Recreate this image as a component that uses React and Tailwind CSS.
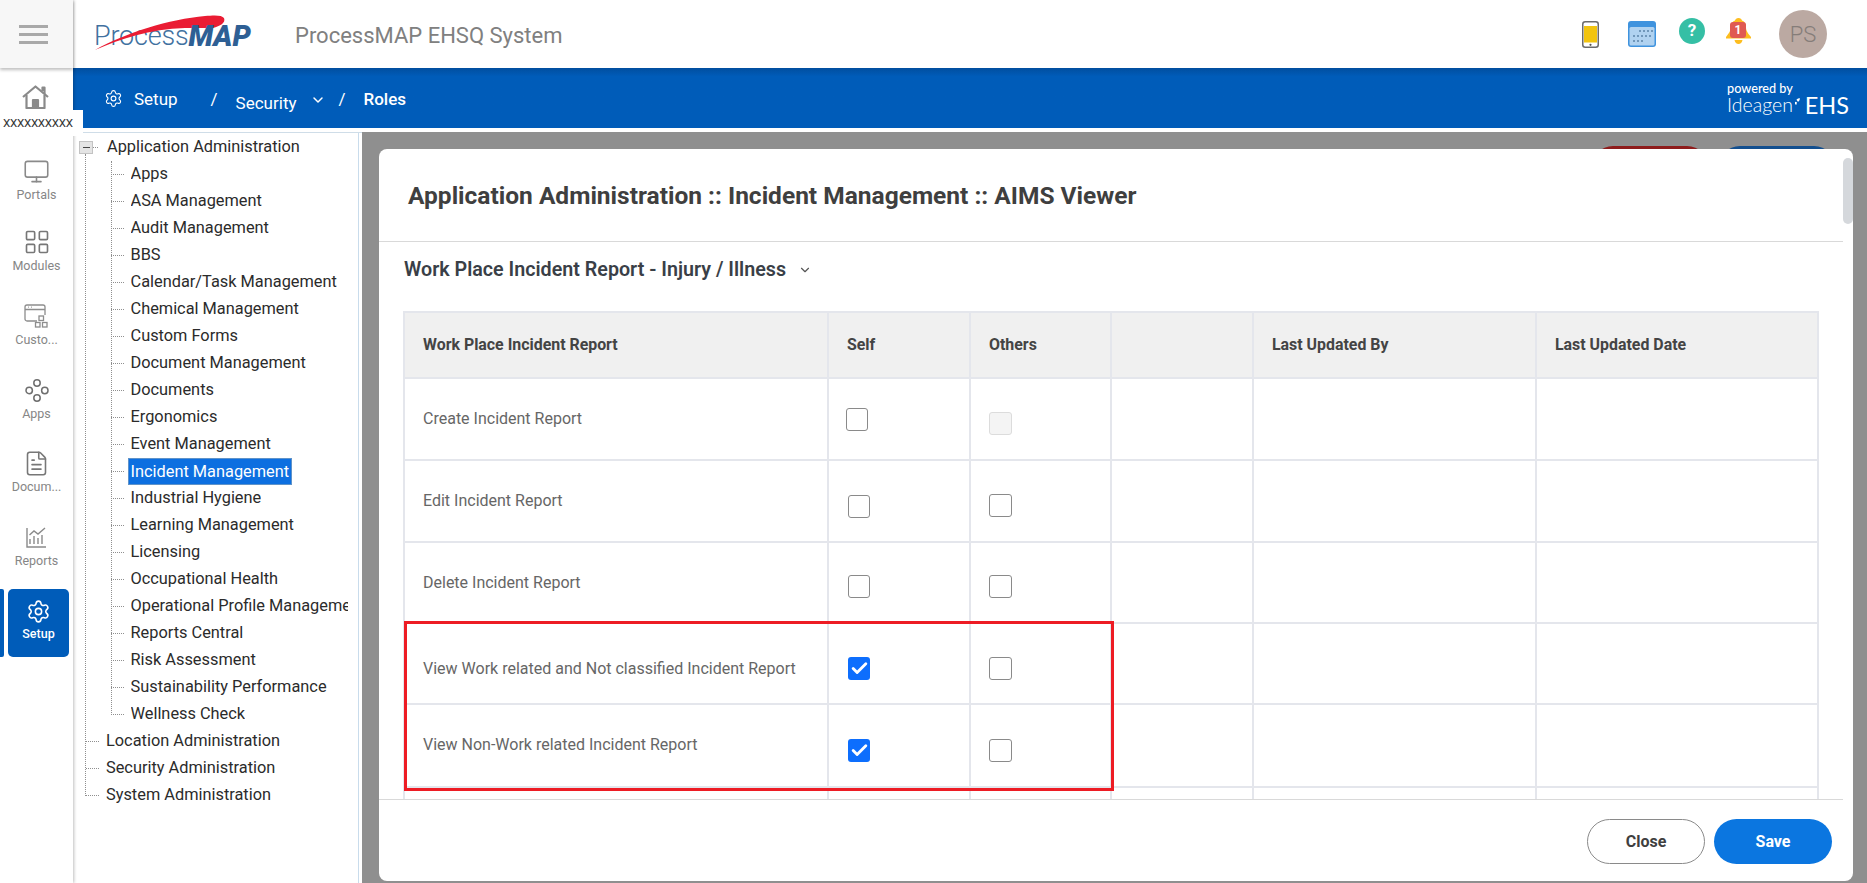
import { Check, ChevronDown, FileText, LayoutGrid, Monitor, Settings } from "lucide-react";

const treeItems = [
  "Apps", "ASA Management", "Audit Management", "BBS", "Calendar/Task Management", "Chemical Management",
  "Custom Forms", "Document Management", "Documents", "Ergonomics", "Event Management", "Incident Management",
  "Industrial Hygiene", "Learning Management", "Licensing", "Occupational Health", "Operational Profile Management",
  "Reports Central", "Risk Assessment", "Sustainability Performance", "Wellness Check",
];

const rows = [
  { label: "Create Incident Report", h: "h-[82px]", text: "pt-0", self: "pt-0 pl-[17px]", others: "pt-2 pl-[18px]", disabled: true },
  { label: "Edit Incident Report", h: "h-[82px]", text: "pt-0", self: "pt-[10px] pl-[19px]", others: "pt-2 pl-[18px]" },
  { label: "Delete Incident Report", h: "h-[81px]", text: "pt-0", self: "pt-2 pl-[19px]", others: "pt-2 pl-[18px]" },
  { label: "View Work related and Not classified Incident Report", h: "h-[81px]", text: "pt-[10px]", self: "pt-[10px] pl-[19px]", others: "pt-[10px] pl-[18px]", checked: true },
  { label: "View Non-Work related Incident Report", h: "h-[83px]", text: "pb-[2px]", self: "pt-[10px] pl-[19px]", others: "pt-[10px] pl-[18px]", checked: true },
  { label: "", h: "h-[30px]", text: "", self: "", others: "" },
];

function HomeIcon() {
  return (
    <svg width="27" height="24" viewBox="0 0 27 24" fill="none" stroke="#8a8a8a" strokeWidth="2.2" strokeLinejoin="round">
      <path d="M1 12 13.500 1.500 26 12" />
      <path d="M4.500 10v13h18V10" />
      <path d="M20.500 6V2.500h2V9" />
      <path d="M11 23v-8h5v8" fill="#8a8a8a" />
    </svg>
  );
}

function CustomIcon() {
  return (
    <svg width="25" height="24" viewBox="0 0 25 24" fill="none" stroke="#8d8d8d" strokeWidth="1.3">
      <path d="M13 17H3a2 2 0 0 1-2-2V3a2 2 0 0 1 2-2h16a2 2 0 0 1 2 2v8" />
      <path d="M1 5.500h20M4 3.200h.8M7 3.200h.8" />
      <rect x="15" y="12" width="4.500" height="4.500" />
      <rect x="11.500" y="18.500" width="4.500" height="4.500" />
      <rect x="18.500" y="18.500" width="4.500" height="4.500" />
    </svg>
  );
}

function AppsIcon() {
  return (
    <svg width="24" height="23" viewBox="0 0 24 23" fill="none" stroke="#6f6f6f" strokeWidth="1.5">
      <circle cx="12" cy="4" r="3.200" />
      <circle cx="4.200" cy="11.500" r="3.200" />
      <circle cx="19.800" cy="11.500" r="3.200" />
      <circle cx="12" cy="19" r="3.200" />
    </svg>
  );
}

function ReportsIcon() {
  return (
    <svg width="21" height="21" viewBox="0 0 21 21" fill="none" stroke="#8a8a8a" strokeWidth="1.4">
      <path d="M1 1v19h19" />
      <path d="M4 17v-5M8 17V9M12 17v-6M16 17V8" />
      <path d="M3.500 8 8 4l4 3 7-6" />
    </svg>
  );
}

function RailItem({ icon, label, className }) {
  return (
    <div className={`flex flex-col items-center ${className}`}>
      <div className="flex h-[24px] items-center justify-center">{icon}</div>
      <span className="mt-[4px] text-[12.5px] leading-[16px] text-[#868686]">{label}</span>
    </div>
  );
}

function Rail() {
  return (
    <aside className="relative z-20 flex w-[73px] shrink-0 flex-col bg-white shadow-[1px_0_3px_rgba(0,0,0,0.25)]">
      <div className="flex h-[68px] flex-col items-center justify-center gap-[5px] bg-[#f7f7f7] pr-[6px] shadow-[0_2px_3px_rgba(0,0,0,0.25)]">
        <span className="h-[3px] w-[29px] bg-[#a9a9a9]" />
        <span className="h-[3px] w-[29px] bg-[#a9a9a9]" />
        <span className="h-[3px] w-[29px] bg-[#a9a9a9]" />
      </div>
      <div className="relative h-[88px] pt-[17px]">
        <div className="flex justify-center pr-[2px]"><HomeIcon /></div>
        <div className="absolute left-0 top-[42px] h-[26px] w-[83px] bg-white pl-[3px] text-[11.6px] leading-[26px] tracking-[-0.3px] text-[#333]">XXXXXXXXXX</div>
      </div>
      <RailItem icon={<Monitor size={27} strokeWidth={1.4} color="#8a8a8a" />} label="Portals" className="mt-[3px]" />
      <RailItem icon={<LayoutGrid size={28} strokeWidth={1.4} color="#777" />} label="Modules" className="mt-[27px]" />
      <RailItem icon={<CustomIcon />} label="Custo..." className="mt-[30px]" />
      <RailItem icon={<AppsIcon />} label="Apps" className="mt-[30px]" />
      <RailItem icon={<FileText size={27} strokeWidth={1.4} color="#777" />} label="Docum..." className="mt-[29px]" />
      <RailItem icon={<ReportsIcon />} label="Reports" className="mt-[30px]" />
      <div className="relative mt-[20px] ml-[8px] flex h-[68px] w-[61px] flex-col items-center rounded-[5px] bg-[#005cb9] pt-[10px]">
        <span className="absolute left-[-8px] top-0 h-[68px] w-[4px] rounded-r-[2px] bg-[#005cb9]" />
        <Settings size={25} strokeWidth={1.5} color="#fff" />
        <span className="mt-[2px] text-[12.5px] font-medium leading-[16px] text-white">Setup</span>
      </div>
    </aside>
  );
}

function Logo() {
  return (
    <div className="relative flex h-[35px] w-[160px] items-center pt-[5px] leading-none">
      <span className="text-[27px] font-light tracking-[-0.2px] text-[#41719f]">Process</span>
      <svg className="absolute left-0 top-[-2px]" width="135" height="37" viewBox="0 0 135 37">
        <path d="M1 35C31 18 76 4 111 1c10-1 17-1 19 2 2 5-4 8-11 10H91C56 14 26 24 1 35Z" fill="#ea1c33" />
      </svg>
      <span className="relative text-[29px] font-black italic text-[#2e5f94]">MAP</span>
    </div>
  );
}

function TopRight() {
  return (
    <div className="flex items-center">
      <svg width="17" height="27" viewBox="0 0 17 27">
        <rect x="0.75" y="0.75" width="15.5" height="25.5" rx="2.5" fill="#fff" stroke="#6b6b6b" strokeWidth="1.5" />
        <rect x="2" y="5" width="13" height="16.5" fill="#f2c40f" />
        <circle cx="8.5" cy="23.8" r="1.1" fill="#555" />
      </svg>
      <svg className="ml-[29px]" width="28" height="26" viewBox="0 0 28 26">
        <rect width="28" height="26" rx="3" fill="#3f93de" />
        <rect x="1.5" y="6" width="25" height="18.5" rx="1.5" fill="#b0d2f0" />
        <g fill="#5b83a8">
          <circle cx="12" cy="10" r="1" /><circle cx="16" cy="10" r="1" /><circle cx="20" cy="10" r="1" /><circle cx="24" cy="10" r="1" />
          <circle cx="6" cy="15" r="1" /><circle cx="10" cy="15" r="1" /><circle cx="14" cy="15" r="1" /><circle cx="18" cy="15" r="1" /><circle cx="22" cy="15" r="1" />
          <circle cx="6" cy="20" r="1" /><circle cx="10" cy="20" r="1" /><circle cx="14" cy="20" r="1" />
        </g>
      </svg>
      <div className="mb-[6px] ml-[23px] flex h-[26px] w-[26px] items-center justify-center rounded-full bg-[#35bfa5] text-[17px] font-bold text-white">?</div>
      <div className="relative mb-[6px] ml-[21px] h-[26px] w-[25px]">
        <svg width="25" height="26" viewBox="0 0 25 26">
          <path d="M12.500 0c2 0 3 1 3.500 2.500 3 1 4 4 4 7 0 4 3 7 5 9.500v1.500H0v-1.500C2 16 5 13 5 9.500c0-3 1-6 4-7C9.500 1 10.500 0 12.500 0Z" fill="#fdbd1f" />
          <path d="M8.500 22h8c-.5 2.500-2 4-4 4s-3.500-1.500-4-4Z" fill="#fdbd1f" />
        </svg>
        <div className="absolute left-[4px] top-[4px] flex h-[16px] w-[16px] items-center justify-center rounded-[3px] bg-[#e05a52] text-[12px] font-bold leading-none text-white">1</div>
      </div>
      <div className="ml-[28px] flex h-[48px] w-[48px] items-center justify-center rounded-full bg-[#bba9a2] text-[22px] font-light text-[#857d79]">PS</div>
    </div>
  );
}

function BlueBar() {
  return (
    <div className="flex h-[60px] items-center bg-linear-to-b from-[#014e9f] to-[#005cb9] to-[14%] pl-[31px] pt-[2px] text-white">
      <Settings size={19} strokeWidth={1.4} className="mb-[1px]" />
      <span className="ml-[11px] text-[17px] leading-none">Setup</span>
      <span className="ml-[33px] text-[17px] leading-none">/</span>
      <span className="ml-[18px] mt-[8px] text-[17px] leading-none">Security</span>
      <ChevronDown size={16} strokeWidth={2.2} className="ml-[13px] mt-[2px]" />
      <span className="ml-[13px] text-[17px] leading-none">/</span>
      <span className="ml-[18px] text-[17px] font-medium leading-none">Roles</span>
      <div className="mb-[2px] ml-auto mr-[18px] flex w-[122px] flex-col [font-family:Lato,sans-serif]">
        <span className="text-[12.7px] font-medium leading-[14px]">powered by</span>
        <div className="flex items-center">
          <span className="text-[19.5px] font-light leading-[20px]">Ideagen</span>
          <svg className="mb-[8px] ml-[2px]" width="10" height="13" viewBox="0 0 10 13" fill="#fff">
            <path d="M3 3c2-2 5-3 7-3 0 3-1 6-4 7Z" />
            <path d="M0 7l4 1-1 5-3-1Z" />
          </svg>
          <span className="ml-[5px] text-[23.5px] font-normal leading-[20px]">EHS</span>
        </div>
      </div>
    </div>
  );
}

function Connector() {
  return <span className="mr-[7px] w-[13px] shrink-0 border-t border-dotted border-[#8f8f8f]" />;
}

function Tree() {
  return (
    <div className="relative w-[289px] shrink-0 overflow-hidden border-t border-[#cfdde8] bg-white pr-[3px] text-[16.35px] text-[#2b2b2b]">
      <div className="h-full border-r border-[#c9dcec] pl-[6px] pt-[1px]">
        <div className="relative">
          <span className="absolute bottom-[13px] left-[6px] top-[20px] border-l border-dotted border-[#8f8f8f]" />
          <div className="relative flex h-[27px] items-center">
            <span className="flex h-[13px] w-[14px] items-center justify-center border border-[#c3c3c3] bg-[#e4e4e4]">
              <span className="h-[1px] w-[7px] bg-[#444]" />
            </span>
            <span className="w-[5px] border-t border-dotted border-[#8f8f8f]" />
            <span className="ml-[9px]">Application Administration</span>
          </div>
          <div className="relative ml-[31.5px]">
            <span className="absolute bottom-[13px] left-0 top-0 border-l border-dotted border-[#8f8f8f]" />
            {treeItems.map((item) => (
              <div key={item} className="flex h-[27px] items-center">
                <Connector />
                {item === "Incident Management" ? (
                  <span className="-ml-[3px] h-[27px] whitespace-nowrap border border-[#5f93c9] bg-[#0d6fe0] px-[2px] leading-[25px] text-white">{item}</span>
                ) : (
                  <span className="max-w-[217px] overflow-hidden whitespace-nowrap">{item}</span>
                )}
              </div>
            ))}
          </div>
          {["Location Administration", "Security Administration", "System Administration"].map((item) => (
            <div key={item} className="flex h-[27px] items-center pl-[7px]">
              <Connector />
              {item}
            </div>
          ))}
        </div>
      </div>
    </div>
  );
}

function Box({ checked, disabled, wide }) {
  if (checked) {
    return (
      <span className="flex h-[23px] w-[22px] items-center justify-center rounded-[3px] bg-[#0d6efd]">
        <Check size={19} strokeWidth={3.6} color="#fff" />
      </span>
    );
  }
  if (disabled) {
    return <span className="block h-[23px] w-[23px] rounded-[3px] border border-[#dcdcdc] bg-[#f4f4f4]" />;
  }
  return <span className={`block h-[23px] rounded-[3px] border-[1.5px] border-[#8a8a8a] bg-white ${wide ? "w-[23px]" : "w-[22px]"}`} />;
}

function PermissionTable() {
  return (
    <table className="w-[1414px] table-fixed border-collapse">
      <colgroup>
        <col className="w-[424px]" />
        <col className="w-[142px]" />
        <col className="w-[141px]" />
        <col className="w-[142px]" />
        <col className="w-[283px]" />
        <col className="w-[282px]" />
      </colgroup>
      <thead>
        <tr className="h-[66px] bg-[#f0f0f0] text-left text-[15.9px] font-bold text-[#444]">
          <th className="border-2 border-[#e4e6ec] pl-[18px] font-bold">Work Place Incident Report</th>
          <th className="border-2 border-[#e4e6ec] pl-[18px] font-bold">Self</th>
          <th className="border-2 border-[#e4e6ec] pl-[18px] font-bold">Others</th>
          <th className="border-2 border-[#e4e6ec]" />
          <th className="border-2 border-[#e4e6ec] pl-[18px] font-bold">Last Updated By</th>
          <th className="border-2 border-[#e4e6ec] pl-[18px] font-bold">Last Updated Date</th>
        </tr>
      </thead>
      <tbody>
        {rows.map((row, i) => (
          <tr key={i} className={row.h}>
            <td className={`border-2 border-[#e4e6ec] pl-[18px] text-[16px] text-[#666] ${row.text}`}>{row.label}</td>
            <td className={`border-2 border-[#e4e6ec] ${row.self}`}>{row.label && <Box checked={row.checked} />}</td>
            <td className={`border-2 border-[#e4e6ec] ${row.others}`}>{row.label && <Box disabled={row.disabled} wide />}</td>
            <td className="border-2 border-[#e4e6ec]" />
            <td className="border-2 border-[#e4e6ec]" />
            <td className="border-2 border-[#e4e6ec]" />
          </tr>
        ))}
      </tbody>
    </table>
  );
}

function Modal() {
  return (
    <div className="relative z-10 flex h-[732px] overflow-hidden rounded-[8px] bg-white">
      <div className="flex min-w-0 flex-1 flex-col">
        <div className="flex h-[93px] shrink-0 items-center border-b border-[#d9d9d9] pl-[29px] pt-[2px] text-[24.5px] font-bold text-[#3f3f3f]">
          Application Administration :: Incident Management :: AIMS Viewer
        </div>
        <div className="min-h-0 flex-1 overflow-hidden pl-[24px]">
          <div className="flex h-[69px] items-center pb-[13px] pl-[1px] text-[19.7px] font-semibold text-[#3a3f47]">
            Work Place Incident Report - Injury / Illness
            <ChevronDown size={14} strokeWidth={2} className="ml-[12px] text-[#555]" />
          </div>
          <PermissionTable />
        </div>
        <div className="flex h-[82px] shrink-0 justify-end gap-[9px] border-t border-[#d9d9d9] pr-[11px] pt-[19px]">
          <button className="h-[45px] w-[118px] rounded-full border border-[#8a8a8a] bg-white text-[16px] font-bold text-[#3f3f3f]">Close</button>
          <button className="h-[45px] w-[118px] rounded-full bg-[#0b76e0] text-[16px] font-bold text-white">Save</button>
        </div>
      </div>
      <div className="w-[10px] shrink-0 pt-[9px]">
        <div className="h-[66px] rounded-[5px] bg-[#d5d8dc]" />
      </div>
      {/* red highlight drawn over the screenshot */}
      <div className="absolute left-[25px] top-[472px] h-[170px] w-[710px] border-[3px] border-[#ed1c24]" />
    </div>
  );
}

export default function App() {
  return (
    <div className="flex h-[883px] w-[1867px] overflow-hidden bg-white [font-family:Roboto,sans-serif]">
      <Rail />
      <div className="flex min-w-0 flex-1 flex-col">
        <header className="flex h-[68px] shrink-0 items-center pl-[21px] pr-[40px]">
          <Logo />
          <span className="ml-[41px] mt-[2px] text-[22px] text-[#808080]">ProcessMAP EHSQ System</span>
          <div className="ml-auto"><TopRight /></div>
        </header>
        <BlueBar />
        <div className="h-[4px] shrink-0 bg-white" />
        <div className="flex min-h-0 flex-1">
          <Tree />
          <div className="relative flex-1 bg-[#8f8f8f] pb-[2px] pl-[17px] pr-[14px] pt-[17px]">
            <span className="absolute left-[1229px] top-[14px] h-[44px] w-[118px] rounded-full bg-[#8e1c1c]" />
            <span className="absolute left-[1356px] top-[14px] h-[44px] w-[118px] rounded-full bg-[#134f8f]" />
            <Modal />
          </div>
        </div>
      </div>
    </div>
  );
}
